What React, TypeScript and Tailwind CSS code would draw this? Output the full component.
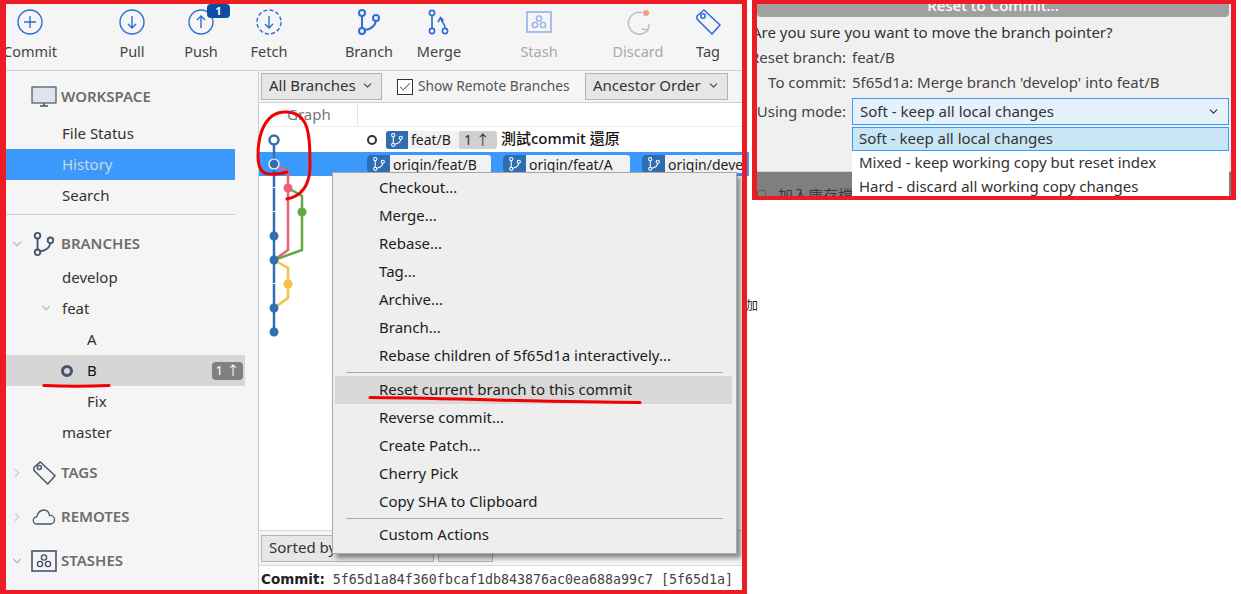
import React from 'react';
import { Check, ChevronDown, ChevronRight } from 'lucide-react';

const UI_FONT = "font-['Noto_Sans','Noto_Sans_CJK_TC',sans-serif]";

const BranchGlyph = ({ className = '' }: { className?: string }) => (
  <svg viewBox="0 0 26 26" fill="none" stroke="currentColor" strokeWidth="2" className={className}>
    <circle cx="6" cy="4" r="3" />
    <circle cx="6" cy="22" r="3" />
    <circle cx="20" cy="9" r="3" />
    <path d="M6 7v12M9 21c6-1 10-4 11-9" />
  </svg>
);

const StashGlyph = ({ className = '' }: { className?: string }) => (
  <svg viewBox="0 0 26 22" fill="none" stroke="currentColor" strokeWidth="1.4" className={className}>
    <rect x="1" y="1" width="24" height="20" strokeWidth="1.6" />
    <circle cx="13" cy="7.5" r="2.6" />
    <circle cx="9" cy="14" r="2.6" />
    <circle cx="17" cy="14" r="2.6" />
  </svg>
);

const TagGlyph = ({ className = '' }: { className?: string }) => (
  <svg viewBox="0 0 26 26" fill="none" stroke="currentColor" strokeWidth="1.6" className={className}>
    <path d="M2 7 9 1l16 15-8 9L2 10z" strokeLinejoin="round" />
    <circle cx="8" cy="7" r="2.2" />
  </svg>
);

const CircleArrow = ({ dir, dashed }: { dir: 'up' | 'down'; dashed?: boolean }) => (
  <svg viewBox="0 0 26 26" fill="none" stroke="#2b6fd6" strokeWidth="1.4" className="h-[26px] w-[26px]">
    <circle cx="13" cy="13" r="12" strokeDasharray={dashed ? '4 2.3' : undefined} />
    {dir === 'down' ? <path d="M13 7v12M9 15l4 4 4-4" /> : <path d="M13 19V7M9 11l4-4 4 4" />}
  </svg>
);

const toolbar: { label: string; icon: React.ReactNode; margin: string; muted?: boolean; badge?: boolean }[] = [
  {
    label: 'Commit',
    margin: 'ml-[-10px]',
    icon: (
      <svg viewBox="0 0 26 26" fill="none" stroke="#2b6fd6" strokeWidth="1.4" className="h-[26px] w-[26px]">
        <circle cx="13" cy="13" r="12" />
        <path d="M13 7v12M7 13h12" />
      </svg>
    ),
  },
  { label: 'Pull', margin: 'ml-[34px]', icon: <CircleArrow dir="down" /> },
  { label: 'Push', margin: 'ml-px', icon: <CircleArrow dir="up" />, badge: true },
  { label: 'Fetch', margin: 'ml-0', icon: <CircleArrow dir="down" dashed /> },
  { label: 'Branch', margin: 'ml-[32px]', icon: <BranchGlyph className="h-[26px] w-[26px] text-[#2b6fd6]" /> },
  {
    label: 'Merge',
    margin: 'ml-[2px]',
    icon: (
      <svg viewBox="0 0 26 26" fill="none" stroke="#2b6fd6" strokeWidth="1.6" className="h-[26px] w-[26px]">
        <circle cx="6" cy="4" r="2.6" />
        <circle cx="6" cy="22" r="2.6" />
        <circle cx="19" cy="22" r="2.6" />
        <path d="M6 7v12M19 19c0-5-3-5-4-9M12 13l2.5-4.5 3 3" />
      </svg>
    ),
  },
  {
    label: 'Stash',
    margin: 'ml-[32px]',
    muted: true,
    icon: <StashGlyph className="h-[22px] w-[26px] text-[#8fb4ea]" />,
  },
  {
    label: 'Discard',
    margin: 'ml-[31px]',
    muted: true,
    icon: (
      <svg viewBox="0 0 26 26" fill="none" className="h-[26px] w-[26px]">
        <path d="M17 3.5A11 11 0 1 0 23 21" stroke="#b9bec6" strokeWidth="1.5" />
        <path d="m17 20 6 1 1-6" stroke="#b9bec6" strokeWidth="1.5" />
        <circle cx="21" cy="4" r="3" fill="#f79a8c" />
      </svg>
    ),
  },
  { label: 'Tag', margin: 'ml-[2px]', icon: <TagGlyph className="h-[26px] w-[26px] text-[#2b6fd6]" /> },
];

const menuTop = ['Checkout...', 'Merge...', 'Rebase...', 'Tag...', 'Archive...', 'Branch...', 'Rebase children of 5f65d1a interactively...'];
const menuMiddle = ['Reverse commit...', 'Create Patch...', 'Cherry Pick', 'Copy SHA to Clipboard'];

const MenuItem = ({ label, active }: { label: string; active?: boolean }) => (
  <div className={`flex h-[28px] items-center pb-[2px] text-[#1c1c1c] ${active ? 'ml-[2px] mr-[4px] bg-[#d8d8d8] pl-[44px]' : 'pl-[46px]'}`}>{label}</div>
);

const SideHeader = ({ label, icon, open, className }: { label: string; icon: React.ReactNode; open?: boolean; className: string }) => (
  <div className={`flex items-center ${className}`}>
    <span className="flex w-[21px] justify-center">
      {open === undefined ? null : open ? (
        <ChevronDown size={14} strokeWidth={2.4} className="text-[#bcbcbc]" />
      ) : (
        <ChevronRight size={14} strokeWidth={2.4} className="text-[#d0d0d0]" />
      )}
    </span>
    <span className="flex w-[34px] justify-center text-[#46546f]">{icon}</span>
    <span className="pb-[1px] text-[15px] font-semibold text-[#6d6d6d]">{label}</span>
  </div>
);

const SideRow = ({ label, indent }: { label: string; indent: string }) => (
  <div className={`flex h-[31px] items-center pb-[1px] text-[#333] ${indent}`}>{label}</div>
);

const RefBadge = ({ label, width }: { label: string; width: string }) => (
  <span className={`flex h-[18px] shrink-0 items-center overflow-hidden rounded-[3px] bg-[#f2f2f2] text-[14px] ${width}`}>
    <span className="flex h-full w-[23px] shrink-0 items-center justify-center bg-[#2f6db3] text-white">
      <BranchGlyph className="h-[14px] w-[14px]" />
    </span>
    <span className="whitespace-nowrap pl-[3px] text-[#222]">{label}</span>
  </span>
);

const Select = ({ label, className }: { label: string; className: string }) => (
  <div className={`flex h-[27px] shrink-0 items-center justify-between border border-[#b4b4b4] bg-[#e6e6e6] pb-[2px] pl-[7px] pr-[7px] text-[#333] ${className}`}>
    <span className="whitespace-nowrap">{label}</span>
    {label && <ChevronDown size={13} strokeWidth={2} className="text-[#444]" />}
  </div>
);

const Graph = () => (
  <svg viewBox="0 0 100 220" fill="none" className="absolute left-0 top-0 h-[220px] w-[100px]">
    <path d="M15 13V205" stroke="#316fb2" strokeWidth="2.5" strokeDasharray="23 1" />
    <path d="M15 37 29 45V123L15 133" stroke="#ef5f7d" strokeWidth="2.5" />
    <path d="M29 61 43 69V123L15 133" stroke="#62a945" strokeWidth="2.5" />
    <path d="M15 133 29 141V171L15 181" stroke="#f8c044" strokeWidth="2.5" />
    <circle cx="15" cy="13" r="4.5" fill="#fff" stroke="#316fb2" strokeWidth="2.5" />
    <circle cx="15" cy="37" r="5" fill="#316fb2" stroke="#fff" strokeWidth="1.2" />
    <circle cx="29" cy="61" r="4.5" fill="#ef5f7d" />
    <circle cx="43" cy="85" r="4.5" fill="#62a945" />
    <circle cx="15" cy="109" r="4.5" fill="#316fb2" />
    <circle cx="15" cy="133" r="4.5" fill="#316fb2" />
    <circle cx="29" cy="157" r="4.5" fill="#f8c044" />
    <circle cx="15" cy="181" r="4.5" fill="#316fb2" />
    <circle cx="15" cy="205" r="4.5" fill="#316fb2" />
  </svg>
);

const RepoWindow = () => (
  <div className="relative flex h-[594px] w-[747px] shrink-0 flex-col overflow-hidden border-y-4 border-l-[6px] border-r-[5px] border-[#ed1c24] bg-[#f5f5f5]">
    {/* toolbar */}
    <div className="flex h-[67px] shrink-0 border-b border-[#cfcfcf] pt-[5px] text-[14.5px]">
      {toolbar.map((item) => (
        <div key={item.label} className={`relative flex w-[68px] shrink-0 flex-col items-center ${item.margin}`}>
          <span className="flex h-[26px] items-center">{item.icon}</span>
          <span className={`mt-[6px] leading-[20px] ${item.muted ? 'text-[#a9a9a9]' : 'text-[#444]'}`}>{item.label}</span>
          {item.badge && (
            <span className="absolute left-[40px] top-[-5px] flex h-[14px] w-[23px] items-center justify-center rounded-[4px] bg-[#0b4ea2] text-[11px] font-bold text-white">1</span>
          )}
        </div>
      ))}
    </div>

    <div className="flex min-h-0 flex-1">
      {/* sidebar */}
      <div className="w-[253px] shrink-0 border-r border-[#cfcfcf]">
        <SideHeader
          label="WORKSPACE"
          className="h-[47px] pt-[5px]"
          icon={
            <svg viewBox="0 0 26 22" fill="none" stroke="currentColor" strokeWidth="1.2" className="h-[22px] w-[26px]">
              <rect x="1" y="1" width="24" height="16" fill="#dfe3ea" />
              <path d="M9 20h8M13 17v3" strokeWidth="1.6" />
            </svg>
          }
        />
        <div className="w-[229px]">
          <SideRow label="File Status" indent="pl-[56px]" />
          <div className="flex h-[31px] items-center bg-[#3b99fc] pb-[1px] pl-[56px] text-[#c9d6e6]">History</div>
          <SideRow label="Search" indent="pl-[56px]" />
          <div className="mt-[3px] border-t border-[#cfcfcf]" />
        </div>
        <SideHeader label="BRANCHES" open className="h-[47px] pt-[10px]" icon={<BranchGlyph className="h-[24px] w-[24px]" />} />
        <SideRow label="develop" indent="pl-[56px]" />
        <div className="flex h-[31px] items-center pb-[1px] pl-[33px] text-[#333]">
          <ChevronDown size={14} strokeWidth={2.4} className="mr-[9px] text-[#bcbcbc]" />
          feat
        </div>
        <SideRow label="A" indent="pl-[81px]" />
        <div className="flex h-[31px] w-[239px] items-center bg-[#d6d6d6] pl-[55px] text-[#111]">
          <span className="h-[12px] w-[12px] rounded-full border-[3px] border-[#46546f]" />
          <span className="ml-[14px] flex-1 pb-[1px]">B</span>
          <span className="mr-[2px] flex h-[18px] w-[31px] items-center justify-center rounded-[4px] bg-[#808080] text-[13px] leading-none text-white">1 ↑</span>
        </div>
        <SideRow label="Fix" indent="pl-[81px]" />
        <SideRow label="master" indent="pl-[56px]" />
        <SideHeader label="TAGS" open={false} className="mt-[3px] h-[44px]" icon={<TagGlyph className="h-[24px] w-[24px]" />} />
        <SideHeader
          label="REMOTES"
          open={false}
          className="h-[44px]"
          icon={
            <svg viewBox="0 0 24 16" fill="none" stroke="currentColor" strokeWidth="1.3" className="h-[16px] w-[24px]">
              <path d="M5 15a3.5 3.5 0 0 1-.5-7C6 3 9 1 12 1c3 0 5 2.5 5.5 5.5A4.3 4.3 0 0 1 19 15z" />
            </svg>
          }
        />
        <SideHeader label="STASHES" open className="h-[44px]" icon={<StashGlyph className="h-[22px] w-[26px]" />} />
      </div>

      {/* history */}
      <div className="flex min-w-0 flex-1 flex-col bg-white">
        <div className="flex h-[32px] shrink-0 items-center border-b border-[#cfcfcf] bg-[#f5f5f5] pl-[2px]">
          <Select label="All Branches" className="w-[121px]" />
          <span className="ml-[15px] flex h-[16px] w-[16px] items-center justify-center border border-[#333] bg-white">
            <Check size={14} strokeWidth={1.5} className="text-[#222]" />
          </span>
          <span className="ml-[5px] w-[167px] text-[13.7px] text-[#555]">Show Remote Branches</span>
          <Select label="Ancestor Order" className="w-[143px]" />
        </div>
        <div className="flex h-[24px] shrink-0 border-b border-[#eeeeee]">
          <div className="w-[99px] border-r border-[#e4e4e4] pl-[28px] leading-[22px] text-[#777]">Graph</div>
        </div>
        <div className="relative min-h-0 flex-1">
          <div className="flex h-[25px] items-center pl-[108px]">
            <span className="h-[10px] w-[10px] rounded-full border-[2.5px] border-[#333]" />
            <span className="ml-[9px] flex h-[18px] w-[111px] items-center overflow-hidden rounded-[3px] bg-[#d0d0d0] text-[14px]">
              <span className="flex h-full w-[22px] items-center justify-center bg-[#2f6db3] text-white">
                <BranchGlyph className="h-[14px] w-[14px]" />
              </span>
              <span className="h-full w-[51px] bg-[#f2f2f2] pl-[3px] leading-[18px] text-[#222]">feat/B</span>
              <span className="pl-[5px] text-[#333]">1 ↑</span>
            </span>
            <span className="ml-[4px] whitespace-nowrap pb-[2px] font-medium text-[#111]">測試commit 還原</span>
          </div>
          <div className="flex h-[24px] items-center gap-[12px] overflow-hidden bg-[#3b99fc] pl-[108px]">
            <RefBadge label="origin/feat/B" width="w-[124px]" />
            <RefBadge label="origin/feat/A" width="w-[127px]" />
            <RefBadge label="origin/develop" width="w-[127px]" />
          </div>
          <Graph />
        </div>
        <div className="flex h-[36px] shrink-0 items-center gap-[4px] border-y border-[#d8d8d8] bg-[#f5f5f5] pl-[2px]">
          <Select label="Sorted by" className="w-[173px]" />
          <Select label="" className="w-[55px]" />
        </div>
        <div className="h-[24px] shrink-0 whitespace-nowrap pl-[2px] pt-[3px] font-['DejaVu_Sans_Mono',monospace] text-[13.3px] leading-[20px] text-[#444]">
          <span className="font-['DejaVu_Sans',sans-serif] text-[13.5px] font-bold text-[#222]">Commit:</span> 5f65d1a84f360fbcaf1db843876ac0ea688a99c7 [5f65d1a]
        </div>
      </div>
    </div>

    {/* context menu */}
    <div className="absolute left-[326px] top-[168px] w-[405px] border border-[#a8a8a8] bg-[#eeeeee] pb-[4px] pt-[1px] shadow-[4px_4px_5px_rgba(0,0,0,0.45)]">
      {menuTop.map((label) => (
        <MenuItem key={label} label={label} />
      ))}
      <div className="mx-[13px] mb-[3px] mt-[2px] border-t border-[#a9a9a9]" />
      <MenuItem label="Reset current branch to this commit" active />
      {menuMiddle.map((label) => (
        <MenuItem key={label} label={label} />
      ))}
      <div className="mx-[13px] my-[2px] border-t border-[#a9a9a9]" />
      <MenuItem label="Custom Actions" />
    </div>

    {/* red marker annotations */}
    <svg viewBox="0 0 747 594" fill="none" stroke="#f00000" strokeWidth="3" strokeLinecap="round" className="absolute left-[-6px] top-[-4px] h-[594px] w-[747px]">
      <path d="M287 199C297 197 309 190 310 168 310 150 310 128 303 120 296 110 280 110 272 116 262 124 258 140 258 156 258 168 262 175 272 174 278 174 284 173 287 172" />
      <path d="M44 385.5c20 1 44 1 65 0" />
      <path d="M370 397.5c60 0 180 5 270 5" />
    </svg>
  </div>
);

const ResetDialog = () => (
  <div className="ml-[5px] h-[200px] w-[484px] shrink-0 overflow-hidden border-y-4 border-x-[5px] border-[#ed1c24] bg-[#f0f0f0]">
    <div className="relative h-full">
      <div className="mr-[2px] flex h-[13px] items-end justify-center overflow-hidden rounded-b-[4px] bg-[#a0a0a0] pb-[2px] font-medium leading-[20px] text-white">Reset to Commit...</div>
      <div className="ml-[-5px] whitespace-nowrap pb-[1px] pt-[3px] leading-[24px] text-[#333]">Are you sure you want to move the branch pointer?</div>
      <div className="flex h-[25px] items-center whitespace-nowrap text-[#444]">
        <span className="flex w-[89px] shrink-0 justify-end">Reset branch:</span>
        <span className="ml-[6px]">feat/B</span>
      </div>
      <div className="flex h-[25px] items-center whitespace-nowrap text-[#444]">
        <span className="flex w-[89px] shrink-0 justify-end">To commit:</span>
        <span className="ml-[6px]">5f65d1a: Merge branch 'develop' into feat/B</span>
      </div>
      <div className="flex h-[30px] items-center whitespace-nowrap pt-[3px] text-[#444]">
        <span className="flex w-[89px] shrink-0 justify-end">Using mode:</span>
        <div className="ml-[6px] flex h-[27px] w-[377px] items-center justify-between border border-[#3b99fc] bg-[#e5f1fb] pl-[7px] pr-[8px] text-[#333]">
          Soft - keep all local changes
          <ChevronDown size={13} strokeWidth={2} className="text-[#333]" />
        </div>
      </div>
      {/* open select list */}
      <div className="absolute left-[95px] top-[123px] z-10 h-[80px] w-[377px] whitespace-nowrap bg-white text-[#333]">
        <div className="flex h-[24px] items-center border border-[#3b99fc] bg-[#c9e6f6] pb-[2px] pl-[6px]">Soft - keep all local changes</div>
        <div className="flex h-[24px] items-center pb-[2px] pl-[7px]">Mixed - keep working copy but reset index</div>
        <div className="flex h-[24px] items-center pb-[2px] pl-[7px]">Hard - discard all working copy changes</div>
      </div>
      {/* dimmed window behind the dialog */}
      <div className="absolute inset-x-0 top-[167px] h-[30px] border-t border-[#cfcfcf] bg-[#7f7f7f]">
        <span className="absolute left-0 top-[18px] h-[14px] w-[9px] rounded-[2px] border border-[#5e5e5e]" />
        <span className="absolute left-[21px] top-[12px] whitespace-nowrap text-[15px] text-[#3a3a3a]">加入庫存檔</span>
      </div>
    </div>
  </div>
);

export default function App() {
  return (
    <div className={`relative flex h-[594px] w-[1241px] overflow-hidden bg-white text-[15px] ${UI_FONT}`}>
      <RepoWindow />
      <ResetDialog />
      {/* bits of the window that stick out past the red frame */}
      <div className="absolute left-[747px] top-[152px] h-[24px] w-[2px] bg-[#3b99fc]" />
      <span className="absolute left-[746px] top-[297px] text-[12px] text-[#222]">加</span>
    </div>
  );
}
